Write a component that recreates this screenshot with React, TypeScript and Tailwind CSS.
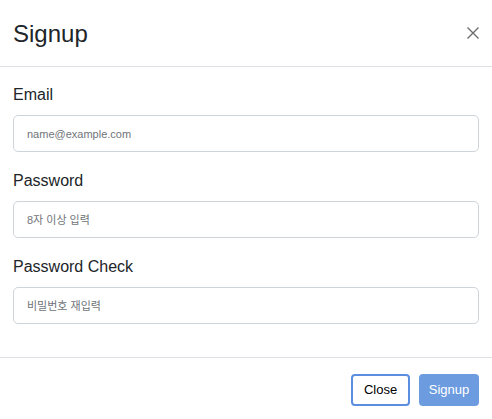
import { useState } from 'react'

const fields = [
  { id: 'email', label: 'Email', type: 'email', placeholder: 'name@example.com' },
  { id: 'password', label: 'Password', type: 'password', placeholder: '8자 이상 입력' },
  { id: 'passwordCheck', label: 'Password Check', type: 'password', placeholder: '비밀번호 재입력' },
]

export default function App() {
  const [values, setValues] = useState<Record<string, string>>({})

  return (
    <div className="w-[492px] h-[419px] bg-white text-[#212529] font-['Liberation_Sans','Noto_Sans_CJK_KR',sans-serif] flex flex-col">
      {/* Header */}
      <div className="h-[67px] flex items-center justify-between px-[13px] border-b border-[#dee2e6]">
        <h1 className="text-[24px] leading-[36px] pt-[2px]">Signup</h1>
        <button className="w-[12px] h-[12px] text-[#6d6d6d]" aria-label="Close">
          <svg viewBox="0 0 12 12" width="12" height="12" fill="none" stroke="currentColor" strokeWidth="1.4">
            <path d="M0.5 0.5 L11.5 11.5 M11.5 0.5 L0.5 11.5" />
          </svg>
        </button>
      </div>

      {/* Body */}
      <div className="px-[13px] pt-[16px] pb-[16px] border-b border-[#dee2e6]">
        {fields.map((f) => (
          <div key={f.id} className="mb-[17px]">
            <label htmlFor={f.id} className="block text-[16px] leading-[24px] mb-[8px]">
              {f.label}
            </label>
            <input
              id={f.id}
              type={f.type}
              placeholder={f.placeholder}
              value={values[f.id] ?? ''}
              onChange={(e) => setValues({ ...values, [f.id]: e.target.value })}
              className="block w-full h-[37px] px-[13px] text-[11px] border border-[#ced4da] rounded-[5px] outline-none placeholder:text-[#6f7479]"
            />
          </div>
        ))}
      </div>

      {/* Footer */}
      <div className="flex justify-end gap-[9px] px-[13px] pt-[16px]">
        <button className="w-[59px] h-[32px] text-[13px] text-black bg-white border-2 border-[#5b8ee0] rounded-[4px]">
          Close
        </button>
        <button disabled className="w-[60px] h-[32px] text-[13px] text-white bg-[#6d9be0] rounded-[4px]">
          Signup
        </button>
      </div>
    </div>
  )
}
